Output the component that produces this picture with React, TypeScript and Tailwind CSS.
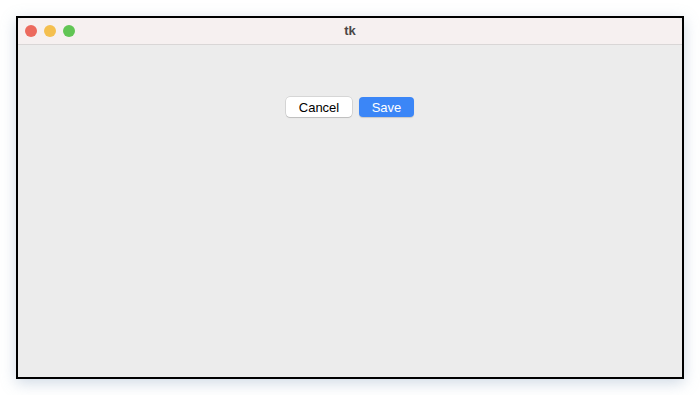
export default function App() {
  return (
    <div className="w-[700px] h-[395px] bg-white pt-[16px] pl-[16px] font-['Liberation_Sans',Arial,sans-serif]">
      <div className="w-[668px] h-[363px] border-2 border-black bg-[#ececec] flex flex-col shadow-[0_4px_14px_rgba(120,150,180,0.35)]">
        {/* Title bar */}
        <div className="h-[27px] bg-[#f6f0f0] border-b border-[#d9d6d6] rounded-t-[6px] flex items-center relative">
          <div className="flex items-center gap-[7px] pl-[7px]">
            <span className="w-[12px] h-[12px] rounded-full bg-[#ec6a5e]" />
            <span className="w-[12px] h-[12px] rounded-full bg-[#f4bf4f]" />
            <span className="w-[12px] h-[12px] rounded-full bg-[#61c554]" />
          </div>
          <div className="absolute inset-0 flex items-center justify-center text-[13px] font-bold text-[#4a4646]">
            tk
          </div>
        </div>
        {/* Content */}
        <div className="flex-1 flex justify-center pt-[52px]">
          <div className="flex gap-[7px] h-[20px]">
            <button className="w-[66px] h-[20px] bg-white rounded-[4px] text-[13px] text-black shadow-[0_0_0_0.5px_rgba(0,0,0,0.18),0_1px_1px_rgba(0,0,0,0.12)] leading-none">
              Cancel
            </button>
            <button className="w-[55px] h-[20px] bg-[#3b86f7] rounded-[4px] text-[13px] text-white shadow-[0_1px_1px_rgba(0,0,0,0.15)] leading-none">
              Save
            </button>
          </div>
        </div>
      </div>
    </div>
  )
}
